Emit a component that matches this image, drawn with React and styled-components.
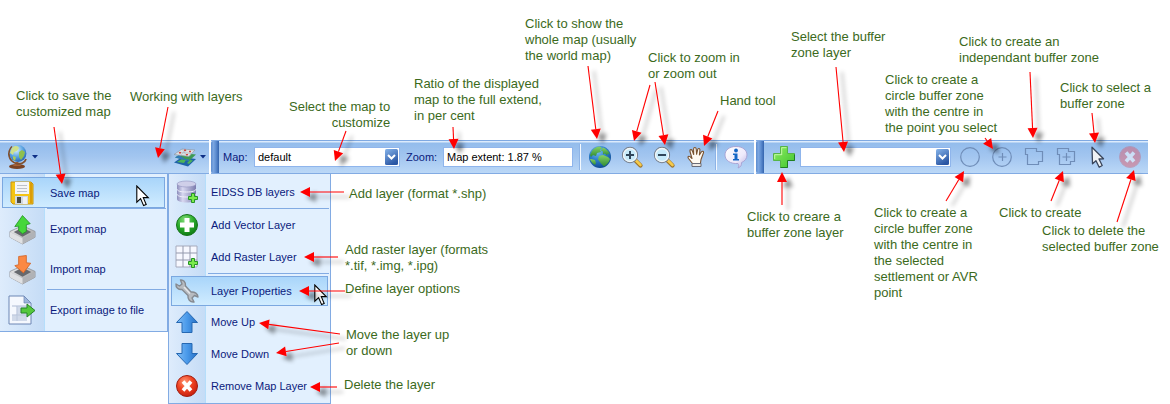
import React from "react";
import styled, { createGlobalStyle, css } from "styled-components";

const GlobalStyle = createGlobalStyle`
  *, *::before, *::after { box-sizing: border-box; }
  body {
    margin: 0;
    background: #fff;
    font-family: "Liberation Sans", Arial, sans-serif;
    font-size: 11px;
    color: #0a1a7c;
  }
  button, input, select { font: inherit; color: inherit; }
`;

const Page = styled.main`
  position: relative;
  min-width: 1160px;
  padding-top: 140px;
`;

const Toolbars = styled.div`
  display: flex;
  gap: 2px;
`;

const Toolbar = styled.div`
  display: flex;
  align-items: center;
  flex: none;
  height: 34px;
  padding-right: 2px;
  border-top: 1px solid #7fa9e2;
  border-bottom: 1px solid #82abe3;
  background: linear-gradient(#dcebfc 0 1px, #93bcec 2px, #a3c6f0 50%, #bbd8f7);
`;

const LayersToolbar = styled(Toolbar)`
  width: 209px;
  padding: 0 3px 0 6px;
  justify-content: space-between;
`;

const Grip = styled.span`
  align-self: stretch;
  width: 8px;
  margin-right: 4px;
  border-radius: 2px 0 0 2px;
  background: linear-gradient(90deg, #5c8ccf, #7ba6e0 30%, #5f8fd2 60%, #3464ae);
`;

const DropButton = styled.button`
  display: flex;
  align-items: center;
  gap: 3px;
  padding: 0;
  border: 0;
  background: none;
`;

const ToolButton = styled.button`
  display: flex;
  align-items: center;
  justify-content: center;
  width: 32px;
  height: 30px;
  padding: 0;
  border: 0;
  background: none;
`;

const Divider = styled.span`
  width: 2px;
  height: 26px;
  margin: 0 3px;
  background: linear-gradient(90deg, #8db3e6 50%, #f4f9ff 50%);
`;

const FieldLabel = styled.label`
  width: ${(p) => p.$width}px;
`;

const field = css`
  height: 20px;
  padding: 0 3px;
  border: 1px solid #8fb5ec;
  border-radius: 0;
  background: #fff;
  color: #000;
  outline: 0;
`;

const SelectBox = styled.span`
  position: relative;
  display: flex;
  width: ${(p) => p.$width}px;
  margin-right: ${(p) => p.$gap}px;
`;

const Select = styled.select`
  ${field}
  width: 100%;
  appearance: none;
`;

const Chevron = styled.svg`
  position: absolute;
  top: 2px;
  right: 2px;
  pointer-events: none;
`;

const TextInput = styled.input`
  ${field}
  width: 130px;
  margin-right: 3px;
`;

const Menus = styled.div`
  display: flex;
  align-items: flex-start;
`;

const Menu = styled.div`
  --column: ${(p) => p.$column}px;
  display: flex;
  flex-direction: column;
  width: ${(p) => p.$width}px;
  padding: ${(p) => p.$top}px 0 1px;
  border: 1px solid #82abe3;
  border-top: 0;
  border-left-width: ${(p) => (p.$first ? 0 : 1)}px;
  background: linear-gradient(
    90deg,
    #deecfc,
    #c5dcf6 calc(var(--column) - 1px),
    #b5defb calc(var(--column) - 1px) var(--column),
    #e2f0fe var(--column)
  );
`;

const MenuItem = styled.button`
  position: relative;
  display: flex;
  align-items: center;
  height: ${(p) => p.$height}px;
  margin: 0 2px;
  padding: 0;
  border: 1px solid transparent;
  background: none;
  text-align: left;
  ${(p) =>
    p.$active &&
    css`
      border-color: #7ba8e0;
      background: linear-gradient(#a9d5fa, #d0ecff);
    `}
`;

const MenuIcon = styled.span`
  display: flex;
  justify-content: center;
  flex: none;
  width: calc(var(--column) - 7px);
  margin-right: 9px;
`;

const MenuRule = styled.hr`
  flex: none;
  height: 1px;
  margin: ${(p) => (p.$spaced ? "0 1px 2px" : "0 1px 0")};
  margin-left: calc(var(--column) + 2px);
  border: 0;
  background: #82abe3;
`;

const MousePointer = styled.svg`
  position: absolute;
  top: 7px;
  right: ${(p) => p.$right}px;
`;

const Note = styled.p`
  position: absolute;
  left: ${(p) => p.$x}px;
  top: ${(p) => p.$y}px;
  margin: 0;
  font-size: 13px;
  line-height: 16px;
  white-space: pre;
  text-align: ${(p) => p.$align || "left"};
  color: #3c6a1c;
`;

const ArrowLayer = styled.svg`
  position: absolute;
  top: 0;
  left: 0;
  pointer-events: none;
`;

const notes = [
  { x: 16, y: 88, text: "Click to save the\ncustomized map" },
  { x: 130, y: 89, text: "Working with layers" },
  { x: 289, y: 99, text: "Select the map to\ncustomize", align: "right" },
  { x: 414, y: 76, text: "Ratio of the displayed\nmap to the full extend,\nin per cent" },
  { x: 525, y: 16, text: "Click to show the\nwhole map (usually\nthe world map)" },
  { x: 648, y: 50, text: "Click to zoom in\nor zoom out" },
  { x: 720, y: 93, text: "Hand tool" },
  { x: 791, y: 29, text: "Select the buffer\nzone layer" },
  { x: 885, y: 72, text: "Click to create a\ncircle buffer zone\nwith the centre in\nthe point you select" },
  { x: 959, y: 34, text: "Click to create an\nindependant buffer zone" },
  { x: 1060, y: 80, text: "Click to select a\nbuffer zone" },
  { x: 747, y: 209, text: "Click to creare a\nbuffer zone layer" },
  { x: 874, y: 205, text: "Click to create a\ncircle buffer zone\nwith the centre in\nthe selected\nsettlement or AVR\npoint" },
  { x: 999, y: 205, text: "Click to create" },
  { x: 1042, y: 223, text: "Click to delete the\nselected buffer zone" },
  { x: 349, y: 186, text: "Add layer (format *.shp)" },
  { x: 345, y: 242, text: "Add raster layer (formats\n*.tif, *.img, *.ipg)" },
  { x: 345, y: 281, text: "Define layer options" },
  { x: 346, y: 327, text: "Move the layer up\nor down" },
  { x: 344, y: 377, text: "Delete the layer" },
];

/* Each arrow runs from its tail to its tip: [x1, y1, x2, y2]. */
const arrows = [
  [54, 127, 62, 184],
  [168, 107, 158, 158],
  [346, 131, 335, 161],
  [453, 127, 454, 149],
  [588, 66, 597, 139],
  [650, 85, 634, 141],
  [655, 82, 665, 145],
  [718, 111, 704, 146],
  [836, 67, 844, 152],
  [782, 205, 782, 172],
  [946, 201, 964, 171],
  [985, 138, 993, 149],
  [1030, 72, 1033, 138],
  [1051, 201, 1063, 171],
  [1092, 113, 1095, 143],
  [1117, 222, 1134, 170],
  [344, 192, 300, 192],
  [338, 257, 304, 257],
  [345, 291, 299, 291],
  [340, 334, 259, 323],
  [339, 343, 276, 353],
  [337, 387, 310, 387],
];

function Arrow({ from: [x1, y1, x2, y2] }) {
  const length = Math.hypot(x2 - x1, y2 - y1);
  const ux = (x2 - x1) / length;
  const uy = (y2 - y1) / length;
  const bx = x2 - ux * 10;
  const by = y2 - uy * 10;
  return (
    <g>
      <line x1={x1} y1={y1} x2={bx} y2={by} stroke="#f00" strokeWidth="1.1" />
      <polygon
        fill="#f00"
        points={`${x2},${y2} ${bx - uy * 5},${by + ux * 5} ${bx + uy * 5},${by - ux * 5}`}
      />
    </g>
  );
}

function Caret() {
  return (
    <svg width="6" height="4" viewBox="0 0 6 4" aria-hidden="true">
      <path d="M0 0H6L3 3.6Z" fill="#0d2f86" />
    </svg>
  );
}

function ChevronBox() {
  return (
    <Chevron width="13" height="16" viewBox="0 0 13 16" aria-hidden="true">
      <defs>
        <linearGradient id="chevron" x1="0" y1="0" x2="0.5" y2="1">
          <stop offset="0" stopColor="#86b4ea" />
          <stop offset="1" stopColor="#2a56a4" />
        </linearGradient>
      </defs>
      <rect width="13" height="16" rx="1.5" fill="url(#chevron)" />
      <path d="M3 6l3.5 3.5L10 6" fill="none" stroke="#fff" strokeWidth="2" />
    </Chevron>
  );
}

function PointerShape(props) {
  return (
    <MousePointer width="14" height="22" viewBox="0 0 14 22" aria-hidden="true" {...props}>
      <path
        d="M.8 1V17.2L4.6 13.6L7.6 20.6L10.2 19.5L7.3 12.6H12.3Z"
        fill="#fff"
        stroke="#000"
        strokeWidth="1.1"
      />
    </MousePointer>
  );
}

function GlobeStandIcon() {
  return (
    <svg width="23" height="26" viewBox="0 0 23 26" aria-hidden="true">
      <defs>
        <radialGradient id="globe-stand" cx=".4" cy=".3" r=".8">
          <stop offset="0" stopColor="#d8f0ff" />
          <stop offset=".5" stopColor="#5ba4e2" />
          <stop offset="1" stopColor="#1c55a4" />
        </radialGradient>
      </defs>
      <ellipse cx="11" cy="22.5" rx="8" ry="2.5" fill="#7a4325" />
      <path d="M7 22l3-4h2l3 4z" fill="#a86137" />
      <path d="M6 2.5C1 8 2 17 10.5 19.5C15 20.5 19 18.5 20 15" fill="none" stroke="#80502f" strokeWidth="1.8" />
      <circle cx="12" cy="9.5" r="8.4" fill="url(#globe-stand)" />
      <path d="M6 4c3-3 6-2 7 0l-2 3-3 1-1 3-3-2z" fill="#cfe08a" />
      <path d="M13 8l3-2 3 2-1 4-3 4-2-3z" fill="#8fc04e" />
      <path d="M7 12l3 1-1 4-2-2z" fill="#a6cc5f" />
    </svg>
  );
}

function LayersIcon() {
  return (
    <svg width="24" height="20" viewBox="0 0 24 20" aria-hidden="true">
      <path d="M1 15.5L9 10l14 2-8 7.5z" fill="#1f63a8" />
      <path d="M4 15l5-3 4 1-2 3zM14 16l3-3 3 .5-4 3.5z" fill="#4db356" />
      <path d="M2 10.5L9 6l14 1.5-7 6.5z" fill="#3d9a53" />
      <path d="M2 10.5l4-2.5 6 4 4 .5v1.5z" fill="#2f78b8" />
      <path d="M1 7.5L9 2l13 1-6 6.5z" fill="#dcdfe2" stroke="#8c9aa8" strokeWidth=".7" />
      <path d="M9 2l5 7M4.5 5l14 1.5M14.5 2.5l-7 5.5" stroke="#a9b2bb" strokeWidth=".6" />
      <path d="M6 5h2v1.5H6zM11 2.5h2V4h-2zM16 3.8h2v1.5h-2zM13 7h2v1.3h-2z" fill="#d3473f" />
    </svg>
  );
}

function EarthIcon() {
  return (
    <svg width="24" height="24" viewBox="0 0 24 24" aria-hidden="true">
      <defs>
        <radialGradient id="earth" cx=".4" cy=".25" r=".8">
          <stop offset="0" stopColor="#7cc0f1" />
          <stop offset=".5" stopColor="#2b7dc8" />
          <stop offset="1" stopColor="#0d448d" />
        </radialGradient>
        <linearGradient id="land" x1="0" y1="0" x2="0" y2="1">
          <stop offset="0" stopColor="#86d264" />
          <stop offset="1" stopColor="#2f8a35" />
        </linearGradient>
      </defs>
      <circle cx="12" cy="12" r="11" fill="url(#earth)" />
      <path d="M4 6c2-3 5-4.500 8-4.500l2 1.5-2 2 1 2-4 1-1 3-3-1-2 2-1-2z" fill="url(#land)" />
      <path d="M15 2.500c3 1 6 4 7 7l-2-1-1 2-2-2-2 1 0-3-2-1z" fill="url(#land)" />
      <path d="M11 11l4-1 5 2 2 2c-1 3-3 6-6 7.500l-3-3-3-4z" fill="url(#land)" />
      <path d="M3 14l4 1 1 3-1 2c-2-1-4-3-5-6z" fill="url(#land)" />
    </svg>
  );
}

function MagnifierIcon({ plus }) {
  return (
    <svg width="24" height="24" viewBox="0 0 24 24" aria-hidden="true">
      <path d="M14.500 14.500l6 6" stroke="#9b722b" strokeWidth="4.200" strokeLinecap="round" />
      <path d="M15 14.500l5.500 5.500" stroke="#f5ca4b" strokeWidth="2.600" strokeLinecap="round" />
      <circle cx="10" cy="10" r="7.600" fill="#c6eafa" stroke="#777f8c" strokeWidth="1.100" />
      <circle cx="10" cy="10" r="6.500" fill="none" stroke="#f3f6f8" strokeWidth="1.300" />
      <path d={plus ? "M6 10h8M10 6v8" : "M6 10h8"} stroke="#30465a" strokeWidth="2" />
    </svg>
  );
}

function HandIcon() {
  return (
    <svg width="18" height="22" viewBox="0 0 18 22" aria-hidden="true">
      <path
        d="M5.5 20.5V17.5L1.5 12.5C.3 10.500 1.800 9.700 3 10.700L5 12.500L3 5.500C2.600 3.300 4.700 3 5.300 4.700L6.700 8.500L6.600 3C6.700 1 9 1 9.200 3L9.600 8.300L10.700 3.500C11.200 1.800 13.200 2.400 12.900 4.300L12.400 9L14.300 6C15.300 4.500 17 5.400 16.400 7L14 13.500L13.500 17V20.500Z"
        fill="#fffaf2"
        stroke="#7a5330"
        strokeWidth="1.1"
        strokeLinejoin="round"
      />
      <path d="M5 17.500h9v3H5z" fill="#eeeae6" stroke="#6a6c78" />
    </svg>
  );
}

function InfoIcon() {
  return (
    <svg width="24" height="24" viewBox="0 0 24 24" aria-hidden="true">
      <defs>
        <linearGradient id="bubble" x1="0" y1="0" x2="1" y2="1">
          <stop offset="0" stopColor="#fff" />
          <stop offset=".6" stopColor="#eeeafb" />
          <stop offset="1" stopColor="#b6addd" />
        </linearGradient>
      </defs>
      <path
        d="M12 1.500C18.500 1.500 23 5 23 10C23 13.500 21 16 17.500 17.600C17.700 20 17 22 14 23C15 21.500 15 20 14 18.500C6.500 19 1 15.500 1 10C1 5 5.500 1.500 12 1.500Z"
        fill="url(#bubble)"
        stroke="#a69fd1"
        strokeWidth=".9"
      />
      <circle cx="12" cy="5.500" r="1.900" fill="#1566c5" />
      <path d="M9 8.500h4.500v5.500H15v1.500H9V14h1.500v-4H9z" fill="#1566c5" />
    </svg>
  );
}

function PlusIcon() {
  return (
    <svg width="24" height="24" viewBox="0 0 24 24" aria-hidden="true">
      <defs>
        <linearGradient id="plus" x1="0" y1="0" x2="1" y2="1">
          <stop offset="0" stopColor="#8fec62" />
          <stop offset="1" stopColor="#3fc42f" />
        </linearGradient>
      </defs>
      <path d="M8.500 1.500h7v7h7v7h-7v7h-7v-7h-7v-7h7z" fill="url(#plus)" stroke="#56b548" />
      <path d="M9.700 10V2.700H14.500M2.700 14V9.700H9.700" fill="none" stroke="#c6f8a6" />
      <path d="M8.500 22.500h7v-7h7v-6" fill="none" stroke="#1f7f22" />
    </svg>
  );
}

function ZoneIcon({ shape, plus }) {
  return (
    <svg width="20" height="20" viewBox="0 0 20 20" fill="none" stroke="#6f8db8" strokeWidth="1.2" aria-hidden="true">
      {shape === "circle" ? (
        <circle cx="10" cy="10" r="9.3" />
      ) : (
        <path d="M1.500 1.500H12.500V4.500H18.500V14.500H14.500V17.500H3.500V7.500H1.500Z" />
      )}
      {plus && <path d="M10.500 6v8M6.500 10h8" />}
    </svg>
  );
}

function ArrowPointerIcon() {
  return (
    <svg width="14" height="23" viewBox="0 0 14 23" aria-hidden="true">
      <path
        d="M1 1.200L12.500 12.800L8 13L11.200 19.500L8.200 21.200L5 14.700L1.500 17.800Z"
        fill="#eef1f4"
        stroke="#39455b"
        strokeWidth="1.3"
        strokeLinejoin="round"
      />
    </svg>
  );
}

function CrossIcon({ faded }) {
  return (
    <svg width="24" height="24" viewBox="0 0 24 24" opacity={faded ? 0.45 : 1} aria-hidden="true">
      <defs>
        <radialGradient id="cross" cx=".4" cy=".3" r=".8">
          <stop offset="0" stopColor="#ff9a78" />
          <stop offset=".45" stopColor="#f04423" />
          <stop offset="1" stopColor="#bd1508" />
        </radialGradient>
      </defs>
      <circle cx="12" cy="12" r="10.5" fill={faded ? "#e25563" : "url(#cross)"} stroke={faded ? "#c06a80" : "#a11d10"} />
      <path d="M8 7.500l8 9M16 7.500l-8 9" stroke="#fff" strokeWidth="3.6" />
    </svg>
  );
}

function SaveIcon() {
  return (
    <svg width="24" height="24" viewBox="0 0 24 24" aria-hidden="true">
      <path d="M1 1H21L23 3V23H3L1 21Z" fill="#f4c414" stroke="#c99410" />
      <path d="M20 2h2v20h-2z" fill="#dc9d08" />
      <path d="M5 1h14v12H5z" fill="#f4f5f7" />
      <path d="M7 4.500h10M7 7.500h10M7 10.500h10" stroke="#bbc1c9" />
      <path d="M5 15h13v8H5z" fill="#d2d8df" />
      <path d="M7 16h4v6H7z" fill="#4b4b42" />
      <path d="M13 16h4v7h-4z" fill="#eff1f4" />
    </svg>
  );
}

function TrayIcon({ up }) {
  return (
    <svg width="27" height="31" viewBox="0 0 28 32" aria-hidden="true">
      <defs>
        <linearGradient id="tray" x1="0" y1="0" x2="1" y2="1">
          <stop offset="0" stopColor="#f5f5f5" />
          <stop offset="1" stopColor="#8f9092" />
        </linearGradient>
      </defs>
      <path d="M1 18L14 12L27 18V24L14 31L1 24Z" fill="url(#tray)" stroke="#8c8e92" strokeWidth=".8" />
      <path d="M5 18.500L14 14L23 18.500L14 23.500Z" fill="#67696d" />
      <path d="M1 18.500L14 25L27 18.500V24L14 31L1 24Z" fill="#b0b2b6" />
      <path d="M1 18.500L14 25V31L1 24Z" fill="#e0e1e3" />
      {up ? (
        <path d="M14 1.500L22 10L18 11V18L14 20.500L10 17V12.500L6 13Z" fill="#46d73a" stroke="#218f23" strokeWidth=".8" />
      ) : (
        <path d="M10 2.500L18 1.500V9L22.500 9.500L15 19.500L6 12L10 11Z" fill="#fb8944" stroke="#d05c1d" strokeWidth=".8" />
      )}
    </svg>
  );
}

function ExportImageIcon() {
  return (
    <svg width="28" height="30" viewBox="0 0 28 30" aria-hidden="true">
      <path d="M1 1H16L23 8V29H1Z" fill="#f5f8fe" stroke="#6d86b4" />
      <path d="M16 1V8H23Z" fill="#9db5dc" stroke="#6d86b4" strokeWidth=".7" />
      <path d="M4 11h15M4 20h15M9 11v15" stroke="#aebbd4" />
      <path d="M9 11h10v9H9zM4 20h15v6H4z" fill="#c0ccdf" opacity=".7" />
      <path d="M13 13h6V9l8 6.500-8 6.500v-4h-6z" fill="#55c83c" stroke="#27832a" />
    </svg>
  );
}

function SmallPlus() {
  return (
    <path
      d="M16.500 13.500h3v3h3v3h-3v3h-3v-3h-3v-3h3z"
      fill="#7bea4c"
      stroke="#279426"
    />
  );
}

function DatabaseIcon() {
  return (
    <svg width="24" height="24" viewBox="0 0 24 24" aria-hidden="true">
      <defs>
        <linearGradient id="db">
          <stop offset="0" stopColor="#8c8dbb" />
          <stop offset=".3" stopColor="#d8d8f1" />
          <stop offset="1" stopColor="#7b7cad" />
        </linearGradient>
      </defs>
      <path d="M2 4V19C2 21 6 22.500 11.500 22.500S21 21 21 19V4Z" fill="url(#db)" />
      <ellipse cx="11.500" cy="4" rx="9.500" ry="3" fill="#cfcfe9" stroke="#9293c0" strokeWidth=".6" />
      <path d="M2 9c0 2 4 3 9.500 3S21 11 21 9M2 14c0 2 4 3 9.500 3S21 16 21 14" fill="none" stroke="#f0f0fb" />
      <SmallPlus />
    </svg>
  );
}

function AddCircleIcon() {
  return (
    <svg width="24" height="24" viewBox="0 0 24 24" aria-hidden="true">
      <defs>
        <radialGradient id="add-circle" cx=".4" cy=".25" r=".8">
          <stop offset="0" stopColor="#85dc7b" />
          <stop offset=".5" stopColor="#2bad2c" />
          <stop offset="1" stopColor="#0b7511" />
        </radialGradient>
      </defs>
      <circle cx="12" cy="12" r="10.5" fill="url(#add-circle)" stroke="#16751a" />
      <path d="M9.500 5h5v4.500H19v5h-4.500V19h-5v-4.500H5v-5h4.500z" fill="#fff" />
    </svg>
  );
}

function GridIcon() {
  return (
    <svg width="24" height="24" viewBox="0 0 24 24" aria-hidden="true">
      <path d="M1 1h21v21H1z" fill="#f7f8ff" stroke="#a6aabc" />
      <path d="M8 1v21M15 1v21M1 8h21M1 15h21" stroke="#9499ad" />
      <SmallPlus />
    </svg>
  );
}

function WrenchIcon() {
  return (
    <svg width="26" height="26" viewBox="0 0 26 26" aria-hidden="true">
      <path
        d="M6.500 2C9 1.500 12 4 11.500 8L17 14C20.500 13.500 24 16 24 19L20.500 17.500L18 20L20 24C16 24.500 13.500 21 14 17.500L8 11.500C4.500 12 1.500 9.500 2 6L5.500 8L8 6Z"
        fill="#b7bbc0"
        stroke="#858a91"
        strokeWidth="1.4"
        strokeLinejoin="round"
      />
      <path d="M10 9l6 6.500" stroke="#e4e6e9" strokeWidth="1.5" />
    </svg>
  );
}

function BlueArrowIcon({ down }) {
  return (
    <svg width="24" height="24" viewBox="0 0 24 24" aria-hidden="true">
      <defs>
        <linearGradient id="blue-arrow">
          <stop offset="0" stopColor="#81bdf5" />
          <stop offset=".5" stopColor="#4a9aea" />
          <stop offset="1" stopColor="#276fc4" />
        </linearGradient>
      </defs>
      <path
        d="M12 1.500L22.500 12.500H17V22.500H7V12.500H1.500Z"
        transform={down ? "matrix(1 0 0 -1 0 24)" : undefined}
        fill="url(#blue-arrow)"
        stroke="#2668b2"
        strokeLinejoin="round"
      />
    </svg>
  );
}

function Item({ icon, label, height, active, children }) {
  return (
    <MenuItem type="button" role="menuitem" $height={height} $active={active}>
      <MenuIcon>{icon}</MenuIcon>
      {label}
      {children}
    </MenuItem>
  );
}

export default function App() {
  return (
    <>
      <GlobalStyle />
      <Page>
        <Toolbars>
          <LayersToolbar role="toolbar" aria-label="Layers">
            <DropButton type="button" aria-label="Map file">
              <GlobeStandIcon />
              <Caret />
            </DropButton>
            <DropButton type="button" aria-label="Layers">
              <LayersIcon />
              <Caret />
            </DropButton>
          </LayersToolbar>

          <Toolbar role="toolbar" aria-label="Map">
            <Grip />
            <FieldLabel htmlFor="map" $width={31}>Map:</FieldLabel>
            <SelectBox $width={146} $gap={6}>
              <Select id="map" defaultValue="default">
                <option>default</option>
              </Select>
              <ChevronBox />
            </SelectBox>
            <FieldLabel htmlFor="zoom" $width={37}>Zoom:</FieldLabel>
            <TextInput id="zoom" defaultValue="Map extent: 1.87 %" />
            <Divider />
            <ToolButton type="button" aria-label="Whole map"><EarthIcon /></ToolButton>
            <ToolButton type="button" aria-label="Zoom in"><MagnifierIcon plus /></ToolButton>
            <ToolButton type="button" aria-label="Zoom out"><MagnifierIcon /></ToolButton>
            <ToolButton type="button" aria-label="Hand"><HandIcon /></ToolButton>
            <Divider />
            <ToolButton type="button" aria-label="Information"><InfoIcon /></ToolButton>
          </Toolbar>

          <Toolbar role="toolbar" aria-label="Buffer zones">
            <Grip />
            <ToolButton type="button" aria-label="Create buffer zone layer"><PlusIcon /></ToolButton>
            <SelectBox $width={151} $gap={3}>
              <Select aria-label="Buffer zone layer" />
              <ChevronBox />
            </SelectBox>
            <ToolButton type="button" aria-label="Circle around settlement"><ZoneIcon shape="circle" /></ToolButton>
            <ToolButton type="button" aria-label="Circle around point"><ZoneIcon shape="circle" plus /></ToolButton>
            <ToolButton type="button" aria-label="Independent zone"><ZoneIcon shape="polygon" /></ToolButton>
            <ToolButton type="button" aria-label="Create zone"><ZoneIcon shape="polygon" plus /></ToolButton>
            <ToolButton type="button" aria-label="Select zone"><ArrowPointerIcon /></ToolButton>
            <ToolButton type="button" aria-label="Delete zone"><CrossIcon faded /></ToolButton>
          </Toolbar>
        </Toolbars>

        <Menus>
          <Menu role="menu" aria-label="Map file" $width={168} $column={45} $top={3} $first>
            <Item icon={<SaveIcon />} label="Save map" height={31} active>
              <PointerShape $right={14} />
            </Item>
            <MenuRule />
            <Item icon={<TrayIcon up />} label="Export map" height={40} />
            <Item icon={<TrayIcon />} label="Import map" height={40} />
            <MenuRule />
            <Item icon={<ExportImageIcon />} label="Export image to file" height={40} />
          </Menu>
          <Menu role="menu" aria-label="Layers" $width={163} $column={37} $top={2}>
            <Item icon={<DatabaseIcon />} label="EIDSS DB layers" height={32} />
            <MenuRule />
            <Item icon={<AddCircleIcon />} label="Add Vector Layer" height={32} />
            <Item icon={<GridIcon />} label="Add Raster Layer" height={32} />
            <MenuRule $spaced />
            <Item icon={<WrenchIcon />} label="Layer Properties" height={30} active>
              <PointerShape $right={-1} />
            </Item>
            <Item icon={<BlueArrowIcon />} label="Move Up" height={32} />
            <Item icon={<BlueArrowIcon down />} label="Move Down" height={32} />
            <Item icon={<CrossIcon />} label="Remove Map Layer" height={32} />
          </Menu>
        </Menus>

        <ArrowLayer width="1160" height="400" viewBox="0 0 1160 400" aria-hidden="true">
          <defs>
            <filter id="arrow-shadow" filterUnits="userSpaceOnUse" x="0" y="0" width="1160" height="404">
              <feDropShadow dx="6" dy="5" stdDeviation="2" floodColor="#000" floodOpacity=".45" />
            </filter>
          </defs>
          <g filter="url(#arrow-shadow)">
            {arrows.map((a) => (
              <Arrow key={a.join()} from={a} />
            ))}
          </g>
        </ArrowLayer>

        {notes.map((n) => (
          <Note key={`${n.x}-${n.y}`} $x={n.x} $y={n.y} $align={n.align}>
            {n.text}
          </Note>
        ))}
      </Page>
    </>
  );
}
